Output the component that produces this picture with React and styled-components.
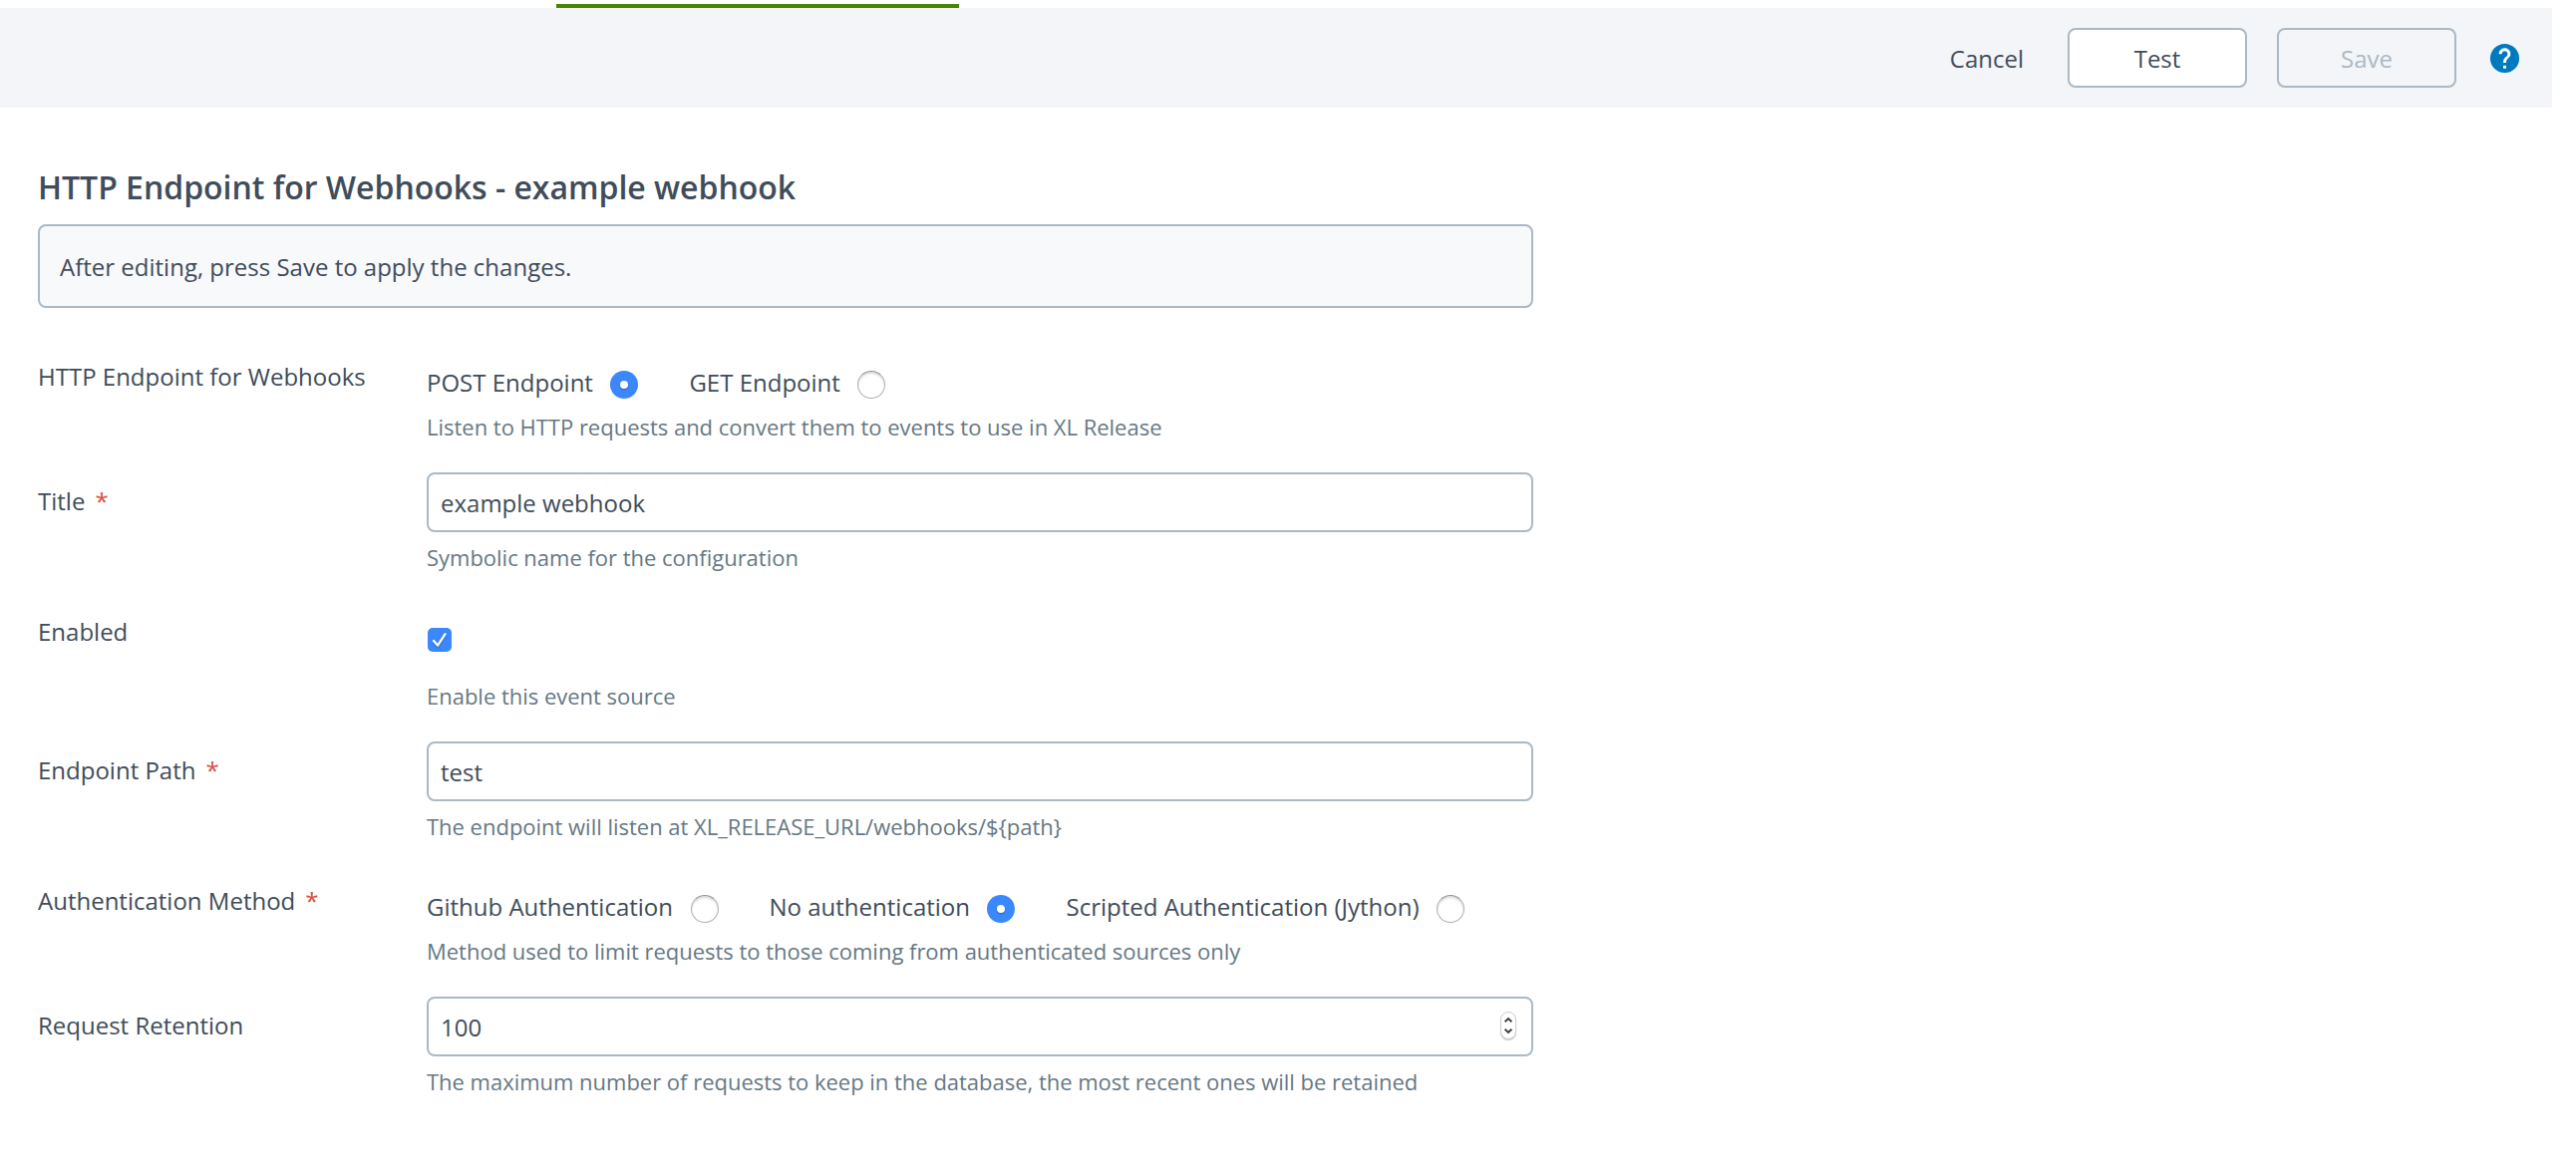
import React, { useState } from "react";
import styled, { createGlobalStyle, css } from "styled-components";

const GlobalStyle = createGlobalStyle`
  *, *::before, *::after { box-sizing: border-box; }
  body {
    margin: 0;
    background: #fff;
    color: #404c5a;
    font-family: "Open Sans", "Noto Sans", sans-serif;
    font-size: 24px;
    line-height: 32px;
  }
`;

const Page = styled.div`
  width: 2560px;
  min-height: 1176px;
`;

const TabStrip = styled.div`
  height: 8px;
  padding: 4px 0 0 558px;
`;

const ActiveTab = styled.div`
  width: 404px;
  height: 4px;
  background: #498500;
`;

const Toolbar = styled.header`
  display: flex;
  align-items: center;
  justify-content: flex-end;
  height: 100px;
  padding-right: 30px;
  background: #f3f5f9;
`;

const buttonText = css`
  font: inherit;
  color: inherit;
  cursor: pointer;
`;

const LinkButton = styled.button`
  ${buttonText}
  margin-right: 44px;
  padding: 2px 0 0;
  border: 0;
  background: none;
  line-height: 32px;
`;

const Button = styled.button`
  ${buttonText}
  width: 180px;
  height: 60px;
  margin-right: 30px;
  padding: 1px 0 0;
  border: 2px solid #abb9c5;
  border-radius: 8px;
  background: #fff;

  &:disabled {
    background: transparent;
    color: #abb9c5;
    cursor: default;
  }
`;

const HelpIcon = styled.svg`
  display: block;
  width: 35px;
  height: 35px;
  margin-left: 1px;
  fill: #007abe;
`;

const Content = styled.main`
  width: 1538px;
  padding: 58px 0 0 38px;
`;

const Heading = styled.h1`
  margin: 0 0 15px;
  font-size: 32px;
  line-height: 44px;
  font-weight: 600;
  letter-spacing: -0.02px;
`;

const Notice = styled.div`
  display: flex;
  align-items: center;
  height: 84px;
  padding: 2px 20px 0;
  border: 2px solid #abb9c5;
  border-radius: 8px;
  background: #f8f9fb;
`;

const Form = styled.form`
  padding-top: 53px;
`;

const Row = styled.div`
  display: grid;
  grid-template-columns: 390px 1fr;
  height: ${(p) => p.$height}px;
`;

const Label = styled.div`
  padding-top: ${(p) => (p.$offset ? 13 : 0)}px;
`;

const Required = styled.span`
  margin-left: 10px;
  color: #d84a3c;
`;

const Help = styled.div`
  margin-top: ${(p) => p.$gap}px;
  color: #667884;
  font-size: 22px;
  line-height: 30px;
  letter-spacing: -0.015px;
`;

const Input = styled.input`
  display: block;
  width: 100%;
  height: 60px;
  padding: 1px 12px 0;
  border: 2px solid #abb9c5;
  border-radius: 8px;
  outline: 0;
  background: #fff;
  color: #404c5a;
  font: inherit;
`;

const RadioGroup = styled.div`
  display: flex;
  gap: 51px;
  height: 28px;
  margin-top: 10px;
`;

const RadioOption = styled.label`
  display: flex;
  align-items: center;
  gap: 17.5px;
  white-space: nowrap;
  cursor: pointer;

  span {
    position: relative;
    top: -2px;
  }
`;

const Radio = styled.input.attrs({ type: "radio" })`
  appearance: none;
  display: grid;
  place-items: center;
  width: 28px;
  height: 28px;
  margin: 0;
  border: 1px solid #b0b0b0;
  border-top-color: #949494;
  border-radius: 50%;
  background: #fff;
  box-shadow: inset 0 2px 2px rgba(0, 0, 0, 0.14);

  &:checked {
    border: 0;
    background: #3b88fd;
    box-shadow: none;
  }

  &:checked::before {
    content: "";
    width: 8px;
    height: 8px;
    border-radius: 50%;
    background: #fff;
    box-shadow: 0 1px 2px rgba(0, 0, 0, 0.3);
  }
`;

const CheckboxBox = styled.button`
  display: block;
  width: 24px;
  height: 24px;
  margin: 12px 0 0 1px;
  padding: 0;
  border: ${(p) => (p.$checked ? "0" : "1px solid #b4b4b4")};
  border-radius: 5px;
  background: ${(p) => (p.$checked ? "#3b88fd" : "#fff")};

  svg {
    display: block;
    filter: drop-shadow(0 1px 1px rgba(0, 0, 0, 0.25));
  }
`;

const NumberField = styled.div`
  position: relative;
`;

const Stepper = styled.div`
  position: absolute;
  top: 15px;
  right: 17px;
  display: flex;
  width: 16px;
  height: 28px;
  border: 1px solid #cfcfcf;
  border-radius: 8px;
  background: #fff;
  box-shadow: 0 1px 1px rgba(0, 0, 0, 0.22);
`;

function Field({ label, required, offset, height, help, gap = 10, children }) {
  return (
    <Row $height={height}>
      <Label $offset={offset}>
        {label}
        {required && <Required>*</Required>}
      </Label>
      <div>
        {children}
        <Help $gap={gap}>{help}</Help>
      </div>
    </Row>
  );
}

function Radios({ name, options, initial }) {
  const [value, setValue] = useState(initial);
  return (
    <RadioGroup>
      {options.map((o) => (
        <RadioOption key={o}>
          <span>{o}</span>
          <Radio name={name} checked={value === o} onChange={() => setValue(o)} />
        </RadioOption>
      ))}
    </RadioGroup>
  );
}

function Checkbox() {
  const [checked, setChecked] = useState(true);
  return (
    <CheckboxBox
      type="button"
      role="checkbox"
      aria-checked={checked}
      $checked={checked}
      onClick={() => setChecked(!checked)}
    >
      {checked && (
        <svg width="24" height="24" viewBox="0 0 24 24" fill="none" stroke="#fff" strokeWidth="2.3" strokeLinecap="round" strokeLinejoin="round">
          <path d="M6 13l4 4.6L17.6 6.2" />
        </svg>
      )}
    </CheckboxBox>
  );
}

export default function App() {
  return (
    <Page>
      <GlobalStyle />
      <TabStrip>
        <ActiveTab />
      </TabStrip>
      <Toolbar>
        <LinkButton>Cancel</LinkButton>
        <Button>Test</Button>
        <Button disabled>Save</Button>
        <HelpIcon viewBox="0 0 24 24">
          <path d="M12 2C6.48 2 2 6.48 2 12s4.48 10 10 10 10-4.48 10-10S17.52 2 12 2z" />
          <path
            fill="#fff"
            d="M13 19h-2v-2h2v2zm2.07-7.75l-.9.92C13.45 12.9 13 13.5 13 15h-2v-.5c0-1.1.45-2.1 1.17-2.83l1.24-1.26c.37-.36.59-.86.59-1.41 0-1.1-.9-2-2-2s-2 .9-2 2H8c0-2.21 1.79-4 4-4s4 1.79 4 4c0 .88-.36 1.68-.93 2.25z"
          />
        </HelpIcon>
      </Toolbar>
      <Content>
        <Heading>HTTP Endpoint for Webhooks - example webhook</Heading>
        <Notice>After editing, press Save to apply the changes.</Notice>
        <Form>
          <Field
            label="HTTP Endpoint for Webhooks"
            height={112}
            gap={13}
            help="Listen to HTTP requests and convert them to events to use in XL Release"
          >
            <Radios name="endpoint" initial="POST Endpoint" options={["POST Endpoint", "GET Endpoint"]} />
          </Field>
          <Field label="Title" required offset height={144} help="Symbolic name for the configuration">
            <Input defaultValue="example webhook" />
          </Field>
          <Field label="Enabled" height={126} gap={29} help="Enable this event source">
            <Checkbox />
          </Field>
          <Field
            label="Endpoint Path"
            required
            offset
            height={144}
            help="The endpoint will listen at XL_RELEASE_URL/webhooks/${path}"
          >
            <Input defaultValue="test" />
          </Field>
          <Field
            label="Authentication Method"
            required
            height={112}
            gap={13}
            help="Method used to limit requests to those coming from authenticated sources only"
          >
            <Radios
              name="auth"
              initial="No authentication"
              options={["Github Authentication", "No authentication", "Scripted Authentication (Jython)"]}
            />
          </Field>
          <Field
            label="Request Retention"
            offset
            height={144}
            help="The maximum number of requests to keep in the database, the most recent ones will be retained"
          >
            <NumberField>
              <Input defaultValue="100" />
              <Stepper>
                <svg width="14" height="26" viewBox="0 0 14 26" fill="none" stroke="#3c3c3c" strokeWidth="1.9">
                  <path d="M3.6 9.2L7 6l3.4 3.2M3.6 16.8L7 20l3.4-3.2" />
                </svg>
              </Stepper>
            </NumberField>
          </Field>
        </Form>
      </Content>
    </Page>
  );
}
